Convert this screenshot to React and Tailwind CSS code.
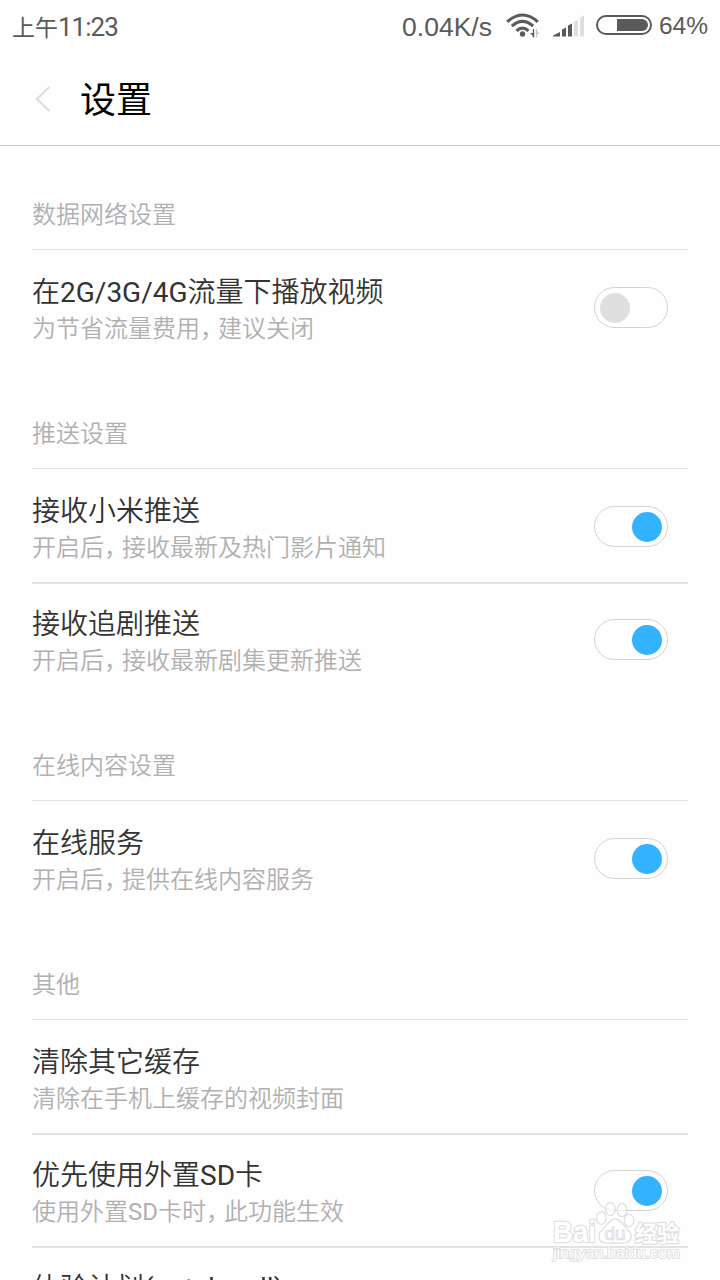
const SECTIONS = [
  {
    title: '数据网络设置',
    items: [{ title: '在2G/3G/4G流量下播放视频', desc: '为节省流量费用，建议关闭', checked: false }],
  },
  {
    title: '推送设置',
    items: [
      { title: '接收小米推送', desc: '开启后，接收最新及热门影片通知', checked: true },
      { title: '接收追剧推送', desc: '开启后，接收最新剧集更新推送', checked: true },
    ],
  },
  {
    title: '在线内容设置',
    items: [{ title: '在线服务', desc: '开启后，提供在线内容服务', checked: true }],
  },
  {
    title: '其他',
    items: [
      { title: '清除其它缓存', desc: '清除在手机上缓存的视频封面' },
      { title: '优先使用外置SD卡', desc: '使用外置SD卡时，此功能生效', checked: true },
      { title: '体验计划(patchwall)', desc: '' },
    ],
  },
]

function StatusBar() {
  return (
    <div className="flex h-[52px] items-center px-3 pt-0.5 text-[#5a5a5a]">
      <div className="flex items-baseline whitespace-nowrap">
        <span className="text-[23px]">上午</span>
        <span className="text-[26px] tracking-[-1px]">11:23</span>
      </div>
      <div className="ml-auto flex items-center whitespace-nowrap font-['Liberation_Sans',sans-serif]">
        <span className="text-[26.5px] leading-8">0.04K/s</span>
        <svg className="-mt-[3px] ml-3.5" width="34" height="26" viewBox="0 0 34 26" fill="none">
          <g stroke="#5a5a5a" strokeWidth="3">
            <path d="M1.2 8.8Q16.5-4.8 31.8 8.8" />
            <path d="M5.8 13.2Q16.5 3.6 27.2 13.2" />
            <path d="M10.5 17.8Q16.5 12.4 22.5 17.8" />
          </g>
          <circle cx="16.5" cy="21" r="2.7" fill="#5a5a5a" />
          <path d="M27.5 16v8.5" stroke="#5a5a5a" strokeWidth="1.4" />
          <path d="M24 20h3v3z" fill="#5a5a5a" />
          <path d="M30.5 16v8.5" stroke="#c9c9c9" strokeWidth="1.4" />
          <path d="M34 21h-3v-3z" fill="#c9c9c9" />
        </svg>
        <svg className="-mt-0.5 ml-[13px]" width="31" height="22" viewBox="0 0 31 22">
          <g fill="#5a5a5a">
            <path d="M0 21.5v-1l7-3.5v4.5z" />
            <path d="M9 21.5v-7l4-2v9z" />
            <path d="M15 21.5v-11l4-2v13z" />
          </g>
          <g fill="#dedede">
            <path d="M21 21.5v-15l4-2v17z" />
            <path d="M27 21.5v-19l4-2v21z" />
          </g>
        </svg>
        <svg className="-mt-1 ml-3" width="56" height="20" viewBox="0 0 56 20">
          <rect x="1" y="1" width="54" height="18" rx="9" fill="none" stroke="#5a5a5a" strokeWidth="2" />
          <path d="M21 4h25a6 6 0 0 1 0 12H21z" fill="#5a5a5a" />
        </svg>
        <span className="-mt-0.5 ml-[7px] text-[24.5px] leading-8">64%</span>
      </div>
    </div>
  )
}

function Header() {
  return (
    <header className="flex h-[94px] items-center border-b border-[#cccccc] pl-[35px] text-black">
      <svg width="16" height="26" viewBox="0 0 16 26" fill="none" stroke="#dcdcdc" strokeWidth="2">
        <path d="M14.5 1L1.8 13l12.7 12" />
      </svg>
      <h1 className="ml-[29px] pt-1 text-[36px] leading-[52px] font-normal">设置</h1>
    </header>
  )
}

function Switch({ checked }) {
  return (
    <button
      type="button"
      role="switch"
      aria-checked={checked}
      className={`flex h-[41px] w-[74px] items-center rounded-full border border-[#d3d3d3] px-[5px] ${
        checked ? 'justify-end' : 'justify-start'
      }`}
    >
      <span className={`size-[30px] rounded-full ${checked ? 'bg-[#33b2ff]' : 'bg-[#dfdfdf]'}`} />
    </button>
  )
}

// Latin runs are a step heavier than the Chinese text, the full-width comma is set tighter
function MixedText({ text }) {
  return text.split(/([\x21-\x7e]+|，)/).map((part, i) => {
    if (i % 2 === 0) return part
    return (
      <span key={i} className={part === '，' ? 'tracking-[-6px]' : 'font-normal'}>
        {part}
      </span>
    )
  })
}

function SettingRow({ item, divided }) {
  return (
    <li
      className={`flex h-[113px] items-start justify-between pr-5 ${
        divided ? 'border-t-2 border-[#e3e3e3] pt-[18px]' : 'pt-5'
      }`}
    >
      <div>
        <h3 className="whitespace-nowrap pt-1 text-[28px] leading-[37px] font-[350] text-[#333333]">
          <MixedText text={item.title} />
        </h3>
        {item.desc && (
          <p className="whitespace-nowrap text-[24px] leading-9 font-[350] text-[#b0b0b0]">
            <MixedText text={item.desc} />
          </p>
        )}
      </div>
      {item.checked !== undefined && (
        <div className="mt-[17px]">
          <Switch checked={item.checked} />
        </div>
      )}
    </li>
  )
}

function Watermark() {
  return (
    <svg
      className="absolute left-[550px] top-[1198px]"
      width="136"
      height="70"
      viewBox="0 0 136 70"
      fill="#ffffff"
      stroke="#dfdfdf"
      strokeWidth="2.4"
      strokeLinejoin="round"
    >
      <g style={{ paintOrder: 'stroke' }}>
        <text x="3" y="44" fontSize="30" fontWeight="700" textLength="43" lengthAdjust="spacingAndGlyphs" fontFamily="Liberation Sans">
          Bai
        </text>
        <text x="85" y="43" fontSize="22" fontWeight="700" textLength="44" fontFamily="Noto Sans CJK SC">
          经验
        </text>
        <text x="3" y="60" fontSize="15.5" strokeWidth="2" textLength="127" lengthAdjust="spacingAndGlyphs" fontFamily="Liberation Sans">
          jingyan.baidu.com
        </text>
      </g>
      <g strokeWidth="1.3">
        <path d="M65 21c6 0 8 6 12 10s5 6 4 9c-2 6-8 5-16 5s-14 1-16-5c-1-4 1-6 5-10s6-9 11-9z" />
        <g fillOpacity="0.6">
          <ellipse cx="51.3" cy="20" rx="4.8" ry="6.3" />
          <ellipse cx="60.5" cy="11" rx="4.8" ry="6.6" />
          <ellipse cx="72" cy="12" rx="4.8" ry="6.6" />
          <ellipse cx="79" cy="22.5" rx="4.8" ry="6.3" />
        </g>
      </g>
      <text x="54.5" y="41.5" fontSize="19" strokeWidth="1" textLength="21" fontFamily="Liberation Sans">
        du
      </text>
    </svg>
  )
}

export default function App() {
  return (
    <div className="relative h-[1280px] w-[720px] overflow-hidden bg-[#fefefe] font-[Roboto,'Noto_Sans_CJK_SC',sans-serif]">
      <StatusBar />
      <Header />
      <main className="-mt-0.5 px-8">
        {SECTIONS.map((section) => (
          <section key={section.title}>
            <h2 className="flex h-[106px] items-end border-b border-[#e3e3e3] pb-4 text-[24px] leading-9 font-[350] text-[#b0b0b0]">
              {section.title}
            </h2>
            <ul>
              {section.items.map((item, i) => (
                <SettingRow key={item.title} item={item} divided={i > 0} />
              ))}
            </ul>
          </section>
        ))}
      </main>
      <Watermark />
    </div>
  )
}
